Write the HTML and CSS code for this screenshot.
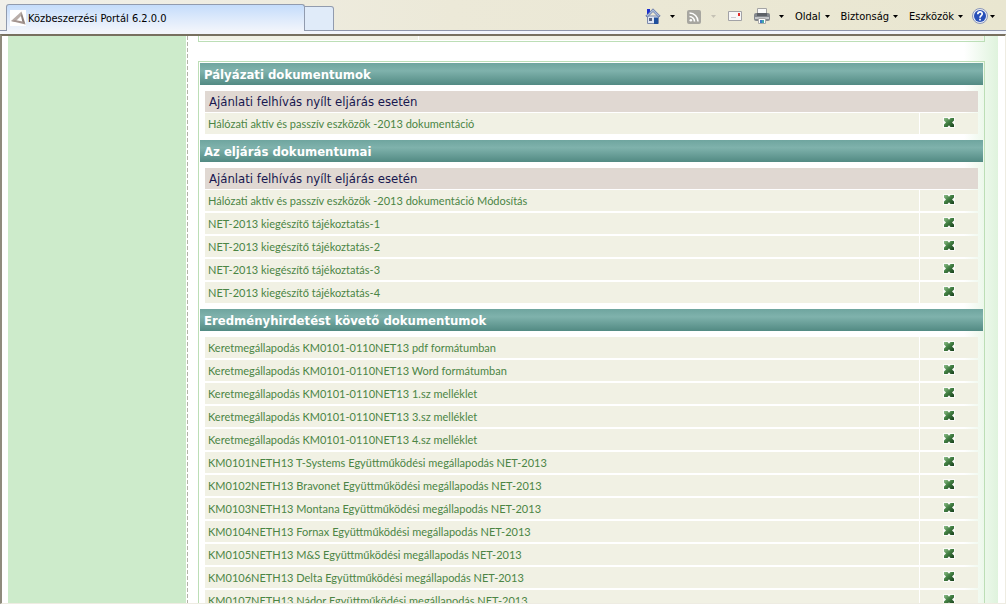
FILE: index.html
```html
<!DOCTYPE html>
<html lang="hu">
<head>
<meta charset="utf-8">
<title>Közbeszerzési Portál 6.2.0.0</title>
<link rel="stylesheet" href="styles.css">
</head>
<body>
<svg class="defs" aria-hidden="true">
  <defs>
    <linearGradient id="leaf" x1="0" y1="0" x2="1" y2="1"><stop offset="0" stop-color="#8fbf8a"/><stop offset=".45" stop-color="#438043"/><stop offset="1" stop-color="#173f1b"/></linearGradient>
    <symbol id="cross" viewBox="0 0 12 11"><path d="M0 0h12v11H0z" fill="#fbfbf8"/><path d="M1 1h3.500L6 2.800 7.500 1H11v2.500L9 5.500l2 2V10H7.500L6 8.200 4.500 10H1V7.500l2-2-2-2z" fill="url(#leaf)"/></symbol>
    <symbol id="down" viewBox="0 0 5 3"><path d="M0 0h5L2.500 3z" fill="currentColor"/></symbol>
  </defs>
</svg>
<header class="chrome">
  <nav class="tabs">
    <button class="tab">
      <svg class="favicon" viewBox="0 0 16 16"><path d="M0 0h16v16H0z" fill="#fff"/><path d="M11.500 1.500 1 11l4 1 6-6z" fill="#b9aea9"/><path d="M11.500 1.500 11 6l1.500 6.500 3 2z" fill="#8f827e"/><path d="M1 11l14.500 3.500-3-3L5 10z" fill="#a3948f"/></svg>
      <span>Közbeszerzési Portál 6.2.0.0</span>
    </button>
    <button class="tab-new" aria-label="Új lap"></button>
  </nav>
  <div class="tools">
    <button class="tool icon-tool" aria-label="Kezdőlap">
      <svg class="icon" viewBox="0 0 16 16"><path d="M2 1h3v5H2z" fill="#1c2fd0"/><path d="M2.500 8h11v7.500h-11z" fill="#dfe6f4" stroke="#7e8bac"/><path d="M8 .8.800 8 2.500 9 8 3.500 13.500 9l1.700-1z" fill="#a9bbdc" stroke="#5a6da0" stroke-width=".8"/><path d="M4 10h3v3H4z" fill="#5a6484"/><path d="M9 9.500h4V16H9z" fill="#1f4f9c"/></svg>
      <svg class="arrow"><use href="#down"/></svg>
    </button>
    <button class="tool icon-tool muted" aria-label="Hírcsatornák">
      <svg class="icon" viewBox="0 0 16 16"><rect x="1" y="2" width="14" height="14" rx="2" fill="#a7a6a0"/><circle cx="4.800" cy="12.300" r="1.300" fill="#fff"/><path d="M3.500 8.500a5 5 0 0 1 5 5M3.500 5a8.500 8.500 0 0 1 8.500 8.500" fill="none" stroke="#fff" stroke-width="1.600"/></svg>
      <svg class="arrow"><use href="#down"/></svg>
    </button>
    <button class="tool" aria-label="Levelek">
      <svg class="icon" viewBox="0 0 16 16"><path d="M1.500 3.500h13v9h-13z" fill="#f7f7f8" stroke="#a2a2a6"/><path d="M11 5h2v3h-2z" fill="#e02c2c"/><path d="M4 9.500h5" stroke="#c9cad2"/></svg>
    </button>
    <button class="tool icon-tool" aria-label="Nyomtatás">
      <svg class="icon" viewBox="0 0 16 16"><path d="M3.500 .5h9V6h-9z" fill="#fafafa" stroke="#a4a4a4"/><rect x="0" y="5" width="16" height="8" rx="2" fill="#83878d"/><path d="M1 9h14v2H1z" fill="#c6c8cb"/><path d="M3 5h10v3H3z" fill="#5d6167"/><path d="M4.500 10.500h7v5h-7z" fill="#fff" stroke="#aaa"/><path d="M6 12h2v3H6z" fill="#3979c9"/><path d="M8 12h2v3H8z" fill="#42a6a8"/></svg>
      <svg class="arrow"><use href="#down"/></svg>
    </button>
    <button class="tool">Oldal <svg class="arrow"><use href="#down"/></svg></button>
    <button class="tool">Biztonság <svg class="arrow"><use href="#down"/></svg></button>
    <button class="tool">Eszközök <svg class="arrow"><use href="#down"/></svg></button>
    <button class="tool help" aria-label="Súgó">
      <svg class="icon" viewBox="0 0 16 16"><circle cx="8" cy="8" r="7.500" fill="#e8ecf5" stroke="#8b97b8"/><circle cx="8" cy="8" r="6" fill="#2850b8"/><path d="M5.800 6.300C5.900 3 10.300 3.200 10.200 6 10.100 7.600 8 7.700 8 9.800M8 10.800v1.700" fill="none" stroke="#fff" stroke-width="1.700"/></svg>
      <svg class="arrow"><use href="#down"/></svg>
    </button>
  </div>
</header>
<div class="viewport">
  <aside class="sidebar"></aside>
  <main class="content">
    <div class="panel-end"><span></span><span></span></div>
    <div class="panel">
      <section>
        <h2>Pályázati dokumentumok</h2>
        <h3>Ajánlati felhívás nyílt eljárás esetén</h3>
        <table>
          <tr><td><a href="#">Hálózati aktív és passzív eszközök -2013 dokumentáció</a></td><td><svg class="cross"><use href="#cross"/></svg></td></tr>
        </table>
      </section>
      <section>
        <h2>Az eljárás dokumentumai</h2>
        <h3>Ajánlati felhívás nyílt eljárás esetén</h3>
        <table>
          <tr><td><a href="#">Hálózati aktív és passzív eszközök -2013 dokumentáció Módosítás</a></td><td><svg class="cross"><use href="#cross"/></svg></td></tr>
          <tr><td><a href="#">NET-2013 kiegészítő tájékoztatás-1</a></td><td><svg class="cross"><use href="#cross"/></svg></td></tr>
          <tr><td><a href="#">NET-2013 kiegészítő tájékoztatás-2</a></td><td><svg class="cross"><use href="#cross"/></svg></td></tr>
          <tr><td><a href="#">NET-2013 kiegészítő tájékoztatás-3</a></td><td><svg class="cross"><use href="#cross"/></svg></td></tr>
          <tr><td><a href="#">NET-2013 kiegészítő tájékoztatás-4</a></td><td><svg class="cross"><use href="#cross"/></svg></td></tr>
        </table>
      </section>
      <section>
        <h2>Eredményhirdetést követő dokumentumok</h2>
        <table>
          <tr><td><a href="#">Keretmegállapodás KM0101-0110NET13 pdf formátumban</a></td><td><svg class="cross"><use href="#cross"/></svg></td></tr>
          <tr><td><a href="#">Keretmegállapodás KM0101-0110NET13 Word formátumban</a></td><td><svg class="cross"><use href="#cross"/></svg></td></tr>
          <tr><td><a href="#">Keretmegállapodás KM0101-0110NET13 1.sz melléklet</a></td><td><svg class="cross"><use href="#cross"/></svg></td></tr>
          <tr><td><a href="#">Keretmegállapodás KM0101-0110NET13 3.sz melléklet</a></td><td><svg class="cross"><use href="#cross"/></svg></td></tr>
          <tr><td><a href="#">Keretmegállapodás KM0101-0110NET13 4.sz melléklet</a></td><td><svg class="cross"><use href="#cross"/></svg></td></tr>
          <tr><td><a href="#">KM0101NETH13 T-Systems Együttműködési megállapodás NET-2013</a></td><td><svg class="cross"><use href="#cross"/></svg></td></tr>
          <tr><td><a href="#">KM0102NETH13 Bravonet Együttműködési megállapodás NET-2013</a></td><td><svg class="cross"><use href="#cross"/></svg></td></tr>
          <tr><td><a href="#">KM0103NETH13 Montana Együttműködési megállapodás NET-2013</a></td><td><svg class="cross"><use href="#cross"/></svg></td></tr>
          <tr><td><a href="#">KM0104NETH13 Fornax Együttműködési megállapodás NET-2013</a></td><td><svg class="cross"><use href="#cross"/></svg></td></tr>
          <tr><td><a href="#">KM0105NETH13 M&amp;S Együttműködési megállapodás NET-2013</a></td><td><svg class="cross"><use href="#cross"/></svg></td></tr>
          <tr><td><a href="#">KM0106NETH13 Delta Együttműködési megállapodás NET-2013</a></td><td><svg class="cross"><use href="#cross"/></svg></td></tr>
          <tr><td><a href="#">KM0107NETH13 Nádor Együttműködési megállapodás NET-2013</a></td><td><svg class="cross"><use href="#cross"/></svg></td></tr>
        </table>
      </section>
    </div>
  </main>
</div>
</body>
</html>
```
FILE: styles.css
```css
* { box-sizing: border-box; }

body {
  margin: 0;
  height: 100vh;
  overflow: hidden;
  display: flex;
  flex-direction: column;
  background: #fff;
  font-family: "DejaVu Sans Condensed", "DejaVu Sans", sans-serif;
  font-size: 11px;
}

.defs {
  position: absolute;
  width: 0;
  height: 0;
}

button {
  font: inherit;
  color: #000;
  background: none;
  border: 0;
  padding: 0;
}

/* Browser bar */
.chrome {
  flex: none;
  display: flex;
  justify-content: space-between;
  height: 34px;
  padding-right: 11px;
  background: linear-gradient(#8f96ab 0 1px, #f2f5fb 1px) 0 30px / 100% 4px no-repeat,
    linear-gradient(90deg, #f1f0ea, #ece9d8 45%, #e9e6d0);
}

.tabs {
  display: flex;
  align-items: flex-start;
  padding: 4px 0 0 6px;
}

.tab {
  display: flex;
  align-items: center;
  gap: 2px;
  width: 299px;
  height: 27px;
  padding: 0 3px;
  border: 1px solid #919bae;
  border-bottom: 0;
  border-radius: 3px 3px 0 0;
  background: linear-gradient(#c4dcfb, #dce9fb 50%, #f2f5fb);
}

.favicon { width: 16px; height: 16px; }

.tab-new {
  width: 29px;
  height: 25px;
  margin-top: 2px;
  border: 1px solid #919bae;
  border-left: 0;
  border-radius: 0 3px 0 0;
  background: #e0ebf9;
}

.tools {
  display: flex;
  align-items: center;
  gap: 11px;
  height: 32px;
}

.tool {
  display: flex;
  align-items: center;
  gap: 4px;
}

.icon-tool { gap: 9px; }
.help { gap: 2px; margin-left: -2px; }
.icon { width: 16px; height: 16px; }
.arrow { width: 5px; height: 3px; }
.muted .arrow { color: #c5c2b5; }

/* Page area */
.viewport {
  flex: 1;
  min-height: 0;
  overflow: hidden;
  display: flex;
  padding: 0 7px 0 6px;
  border: solid;
  border-width: 2px 1px 1px 2px;
  border-color: #77705f #eeece2 #eeece2 #8f8b7d;
}

.sidebar {
  flex: none;
  width: 180px;
  margin-right: 10px;
  background: linear-gradient(90deg, #cdebcb 178px, #fff 178px 179px, transparent 179px),
    repeating-linear-gradient(#b3b3a8 0 4px, #fff 4px 6px);
}

.content {
  flex: 1;
  padding-right: 13px;
  background: linear-gradient(270deg, #dff3dd, #fff 34px);
}

.panel-end {
  display: grid;
  grid-template-columns: 218px 1fr;
  gap: 1px;
  height: 6px;
  padding: 0 1px 1px;
  border: 1px solid #bcdeb6;
  border-top: 0;
}

.panel-end span { background: #f1f1e4; }

.panel {
  margin-top: 19px;
  padding: 1px;
  border: 1px solid #bcdeb6;
}

section { padding-bottom: 4px; }

h2 {
  margin: 0 0 6px;
  padding: 1px 0 0 4px;
  font-size: 13px;
  line-height: 21px;
  color: #fff;
  background: linear-gradient(#6fa59f, #7fb2ac 35%, #528a83);
}

h3 {
  margin: 0 5px 1px;
  padding-left: 4px;
  font-size: 13px;
  font-weight: 400;
  line-height: 21px;
  color: #17174f;
  background: #e0d8d2;
}

table {
  width: calc(100% - 10px);
  margin: 0 5px;
  border-spacing: 0;
  table-layout: fixed;
  font-family: Lato, sans-serif;
}

td {
  height: 23px;
  padding: 1px 3px 0;
  line-height: 20px;
  border-bottom: 2px solid transparent;
  background: #f1f1e4 padding-box;
}

td:last-child {
  width: 59px;
  padding: 0 0 2px;
  border-left: 1px solid transparent;
  text-align: center;
}

a {
  color: #4b8544;
  text-decoration: none;
}

.cross {
  display: block;
  width: 12px;
  height: 11px;
  margin: 0 auto;
}
```
